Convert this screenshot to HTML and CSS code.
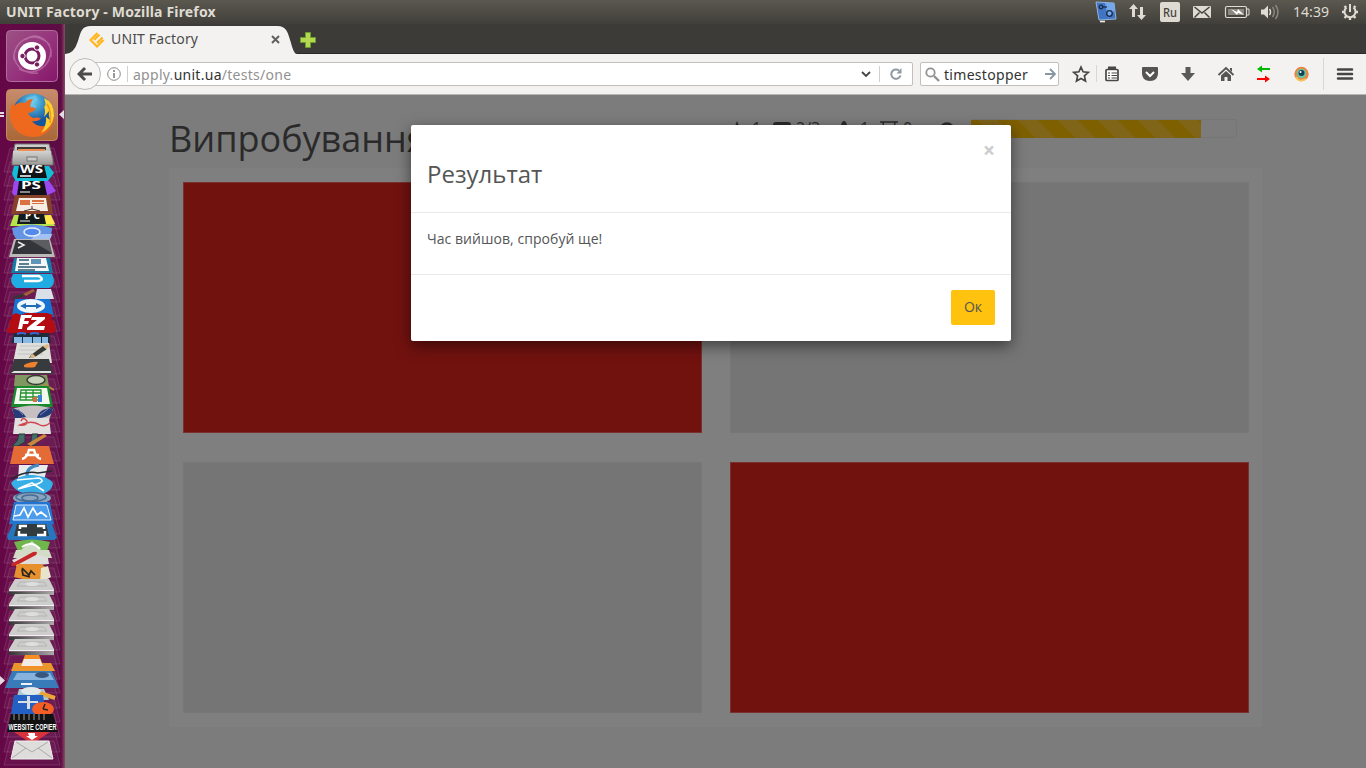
FILE: index.html
```html
<!DOCTYPE html>
<html lang="uk">
<head>
<meta charset="utf-8">
<title>UNIT Factory</title>
<link rel="stylesheet" href="styles.css">
</head>
<body>
<header class="menubar">
  <span class="window-title">UNIT Factory - Mozilla Firefox</span>
  <svg class="indicators" width="280" height="24" viewBox="1086 0 280 24">
    <path d="M1096 2l18 1 2 16-17 1z" fill="#3f75c4" stroke="#97b5da"/><path d="M1105 3h9l1 7-7 8z" fill="#73a8ed"/>
    <g fill="none" stroke="#1d2b42" stroke-width="1.3"><circle cx="1101" cy="7" r="1.800"/><circle cx="1109.500" cy="13.500" r="2.800"/><path d="M1103 7l4 0"/></g><path d="M1100 21.500h5" stroke="#eee" stroke-width="1.600"/>
    <g fill="#dfdbd2">
      <path d="M1133.500 4l4.500 5h-3v8h-3v-8h-3zM1141.500 20l-4.500-5h3v-8h3v8h3z"/>
      <rect x="1160" y="2" width="20" height="20" rx="2"/>
      <rect x="1193" y="6" width="18" height="12" rx="1"/>
      <path d="M1261 9.500h3l4-4v13l-4-4h-3z"/>
    </g>
    <path d="M1194.500 7l7.500 6 7.500-6M1194.500 17.500l5-5M1209.500 17.500l-5-5" fill="none" stroke="#45433e" stroke-width="1.500"/>
    <rect x="1225.500" y="6.500" width="21" height="11" rx="1.500" fill="none" stroke="#dfdbd2" stroke-width="1.200"/><path d="M1247 9h2v6h-2" fill="none" stroke="#dfdbd2"/><rect x="1228" y="9" width="16" height="6" fill="#8b8880"/><path d="M1231 9l6 3 1-3 6 6-6-2-1 2z" fill="#fff"/>
    <path d="M1269.500 9q2 3 0 6" fill="none" stroke="#dfdbd2" stroke-width="1.500"/><path d="M1272.500 7q3.500 5 0 10M1275.500 5q5 7 0 14" fill="none" stroke="#89867d" stroke-width="1.500"/>
    <text class="keyboard" x="1163" y="17" textLength="14" lengthAdjust="spacingAndGlyphs">Ru</text>
    <text class="clock" x="1293" y="17" textLength="36" lengthAdjust="spacingAndGlyphs">14:39</text>
    <g fill="none" stroke="#dfdbd2"><path d="M1346.500 7.500a5.500 5.500 0 1 0 7 0" stroke-width="2"/><path d="M1350 4v8" stroke-width="2"/><path d="M1344.500 6l1.600 1.600M1355.500 6l-1.600 1.600M1342 12h2.500M1355.500 12h2.500M1344.500 18l1.600-1.600M1355.500 18l-1.600-1.600M1350 17.500v2.500" stroke-width="2.400"/></g>
  </svg>
</header>
<div class="desktop">
  <nav class="launcher">
  <svg width="65" height="744" viewBox="0 24 65 744">
    <defs>
      <linearGradient id="dash" x1="0" y1="0" x2="1" y2="1"><stop offset="0" stop-color="#9b5282"/><stop offset=".5" stop-color="#97357e"/><stop offset="1" stop-color="#861668"/></linearGradient>
      <linearGradient id="fox" x1="0" y1="0" x2="0" y2="1"><stop offset="0" stop-color="#c78c6d"/><stop offset="1" stop-color="#a96738"/></linearGradient>
      <linearGradient id="metal" x1="0" y1="0" x2="0" y2="1"><stop offset="0" stop-color="#d2d2d0"/><stop offset="1" stop-color="#9d9d9b"/></linearGradient>
      <linearGradient id="rim" x1="0" y1="0" x2="1" y2="0"><stop offset="0" stop-color="#333"/><stop offset="1" stop-color="#aaa"/></linearGradient>
      <radialGradient id="globe" cx=".5" cy=".2"><stop offset="0" stop-color="#66d0ee"/><stop offset="1" stop-color="#14559d"/></radialGradient>
      <g id="glass"><path d="M10 0h44l6 24H4z" fill="#fff" fill-opacity=".04" stroke="#cf9fc0" stroke-opacity=".2"/></g>
      <g id="drive"><path d="M15 0h34l5 10v2H9v-2z" fill="#cdcdcb"/><path d="M9 11h45v1.500H9z" fill="#f1f1f1"/><path d="M9 12.500h45V16H9z" fill="url(#rim)"/><path d="M20 3h24l3 4H17z" fill="none" stroke="#b4b4b2"/><ellipse cx="32" cy="5" rx="7" ry="2" fill="#dededd"/></g>
    </defs>
    <g><use href="#glass" y="148"/><use href="#glass" y="162"/><use href="#glass" y="176"/><use href="#glass" y="191"/><use href="#glass" y="205"/><use href="#glass" y="220"/><use href="#glass" y="234"/><use href="#glass" y="249"/><use href="#glass" y="263"/><use href="#glass" y="278"/><use href="#glass" y="292"/><use href="#glass" y="307"/><use href="#glass" y="321"/><use href="#glass" y="336"/><use href="#glass" y="350"/><use href="#glass" y="365"/><use href="#glass" y="379"/><use href="#glass" y="394"/><use href="#glass" y="408"/><use href="#glass" y="423"/><use href="#glass" y="437"/><use href="#glass" y="452"/><use href="#glass" y="466"/><use href="#glass" y="481"/><use href="#glass" y="495"/><use href="#glass" y="510"/><use href="#glass" y="524"/><use href="#glass" y="539"/><use href="#glass" y="553"/><use href="#glass" y="568"/><use href="#glass" y="582"/><use href="#glass" y="597"/><use href="#glass" y="611"/><use href="#glass" y="626"/><use href="#glass" y="640"/><use href="#glass" y="655"/><use href="#glass" y="669"/><use href="#glass" y="684"/><use href="#glass" y="698"/><use href="#glass" y="713"/><use href="#glass" y="728"/><use href="#glass" y="741"/></g>

    <rect x="6.500" y="30.500" width="51" height="51" rx="4" fill="url(#dash)" stroke="#b06b9f"/>
    <path d="M14 60C12 43 32 27 50 45M51 49c0 18-16 28-32 20M25 40c13-10 28 2 26 17M38 73c-13 2-23-7-24-17" fill="none" stroke="#dfadd0" stroke-opacity=".4" stroke-width="1.500"/>
    <circle cx="32" cy="56" r="14" fill="#fff"/><circle cx="32" cy="56" r="7" fill="none" stroke="#791c60" stroke-width="3"/><g fill="#791c60" stroke="#fff"><circle cx="22.500" cy="56" r="2.700"/><circle cx="37" cy="47.500" r="2.700"/><circle cx="37" cy="64.500" r="2.700"/></g>

    <rect x="6.500" y="89.500" width="51" height="51" rx="4" fill="url(#fox)" stroke="#c08b67"/>
    <circle cx="33" cy="114" r="20.500" fill="url(#globe)"/><path d="M26 98l10-3 2 5-5 3 4 4-7 2z" fill="#75caec" opacity=".6"/>
    <path d="M13 102q-4 8-3 15 2 13 13 18 13 5 23-2 8-7 8-17-3 8-10 10-8 1-12-5 6 1 9-3-4-1-8 0-4-2-5-5 4 0 8-4-2-2-6-2 0-4 3-8-5 0-8 4-6-2-11 3z" fill="#ee681d"/><path d="M44 98q10 4 10 18-2 12-13 17 6-8 5-16l4 3q-2-5-1-9l-5 6q2-7 0-10 3-1 0-9z" fill="#ffd02e"/><path d="M47 104q5 8 3 19" fill="none" stroke="#f39a1c" stroke-width="1.500"/>
    <path d="M0 112h4v2H0zM0 115h4v2H0zM64 110l-5 4.500 5 4.500zM0 676l5 4.500-5 4.500z" fill="#e4dce2"/>

    <path d="M15 144h34l4 15v6H12v-6z" fill="url(#metal)" stroke="#707070"/><path d="M17 147h29v3H17z" fill="#3e3935"/><path d="M18 149h27v2H18z" fill="#ee8e55"/><path d="M13 151h38v13H13z" fill="url(#metal)"/><rect x="27" y="157" width="10" height="4" fill="#c9c9c7" stroke="#777"/>
    <path d="M14 166h35l5 7-7 9H16l-4-8z" fill="#13bed7"/><path d="M19 165h25l3 13H17z" fill="#101318"/><text class="tile-code" x="20" y="173" textLength="23" lengthAdjust="spacingAndGlyphs">WS</text><path d="M20 176h11" stroke="#fff" stroke-width="1.500"/>
    <path d="M14 181h35l7 10-8 4 0 4H17l-5-6z" fill="#9c48f0"/><path d="M19 181h25l3 14H17z" fill="#101018"/><text class="tile-code" x="21" y="189" textLength="20" lengthAdjust="spacingAndGlyphs">PS</text><path d="M20 192h10" stroke="#fff"/>
    <path d="M14 215h36l5 11H10z" fill="#b4e34a"/><path d="M43 216l8-1 4 9H41z" fill="#ffe84c"/><path d="M19 214h25l2 10H17z" fill="#121b1a"/><text class="tile-code" x="25" y="219" textLength="15">PC</text><path d="M20 221h10" stroke="#eee"/>
    <path d="M15 195h35l3 19H11z" fill="#874329"/><path d="M19 198h27l2 13H16z" fill="#f6ede5"/><path d="M20 200h10v5H20zm12 0h12v2H32zm0 3h12v1H32z" fill="#db7042"/><path d="M32 206v3l-8 2m8-2 8 2" fill="none" stroke="#49302b"/>
    <path d="M12 228q20-7 40 0 0 13-13 17H24q-11-5-12-17z" fill="#6495e4"/><path d="M24 245l13-11h15q-1 9-15 11z" fill="#9fc1f4"/><ellipse cx="32" cy="232" rx="8" ry="4" fill="#548aed" stroke="#ebf1fc" stroke-width="1.500"/>
    <path d="M14 239h36l5 18H9z" fill="#bbbab8"/><path d="M16 240h32l4 14H12z" fill="#33353a"/><path d="M30 240h19l3 13z" fill="#5c5d60"/><path d="M18 242l6 3-6 3" fill="none" stroke="#eee" stroke-width="1.500"/>
    <path d="M14 258h36l3 15H11z" fill="#157ca7"/><path d="M17 258h29l3 13H15z" fill="#f4f6f8"/><path d="M19 260h10M19 264h10M18 267h28M18 270h17" stroke="#2a5971" stroke-width="1.300"/><path d="M31 259h10v5H31z" fill="#5f95b7"/>
    <path d="M13 274h39q5 11-3 14H16q-8-6-3-14z" fill="#20abe2"/><path d="M22 276h17q6 4-1 5H24" fill="none" stroke="#fff" stroke-width="2.500"/>
    <path d="M37 289h14l3 10H35z" fill="#d9e0e8"/><path d="M33 289l2 3-16 6-8 1q4-4 12-5z" fill="#343638"/><path d="M23 294l10-5 2 2-9 5z" fill="#a65f39"/>
    <path d="M15 299h35l4 18H12z" fill="#1674d2"/><ellipse cx="31" cy="306" rx="14" ry="7" fill="#eff7ff"/><path d="M20 306l6-3v2h10v-2l6 3-6 3v-2H26v2z" fill="#236cb5"/>
    <path d="M12 315l4-2 5 2 5-2h21l6 2-2 4 3 3 2 8-3 3H9l-3-3 4-4-1-4 3-4z" fill="#b40c13"/><path d="M21 315h11l-1 3h-6l-1 3h5l-1 3h-5l-1 5h-4zM32 317h13v2l-9 7h9l-1 4H27v-2l10-8h-6z" fill="#fff"/>
    <path d="M14 333h35l2 10H11z" fill="#202b3a"/><path d="M14 337h8v6h-8zm9 0h9v6h-9zm10 0h8v6h-8zm9 0h6v6h-6z" fill="#87b9e4"/><path d="M17 334q5-2 9 0m4 0q5-2 9 0" fill="none" stroke="#3668d1" stroke-width="2"/>
    <path d="M17 343h32l3 20H13z" fill="#dededb"/><path d="M20 346h25M19 350h27M18 354h25" stroke="#c3c3c1"/><path d="M31 355l12-9 4 3-12 8-6 1z" fill="#373732"/><path d="M31 355l2-1 3 3-6 1zM43 346l4-2 3 2-4 3z" fill="#ddba83"/>
    <path d="M14 359h35l4 15H10z" fill="#383b3e"/><path d="M14 371h37v2H11z" fill="#e1e1df"/><path d="M24 365q8-4 14-3l-3 5q-5 1-11 0z" fill="#ed812e"/>
    <path d="M15 375h32l2 11H14z" fill="#809762"/><ellipse cx="36" cy="380" rx="9" ry="4.500" fill="#c8d1bc" stroke="#343c30" stroke-width="1.500"/><path d="M44 384l10 6" stroke="#b48a39" stroke-width="2"/>
    <path d="M15 386h34l4 21H11z" fill="#178a2e"/><path d="M17 388h30l3 16H14z" fill="#f4f9ef"/><path d="M21 390h20v10H20zM21 393h20M20 397h22M26 390v10M33 390v10" fill="none" stroke="#249130" stroke-width="1.300"/><path d="M33 397h4v5h-4z" fill="#db6e40"/><path d="M38 395h4v7h-4z" fill="#3584d8"/>
    <path d="M12 409q22-7 41 0l-4 11H16z" fill="#c7c0c3"/><path d="M12 408q11 3 14 9l-11 2zM53 408q-14 0-16 10 10 0 15-5z" fill="#263b77"/><path d="M18 409l5 6M48 409l-8 6" stroke="#788bbb"/>
    <path d="M15 418h34l2 16H13z" fill="#e1e0df"/><path d="M21 421q2-5 6 0 0 5-7 4 11-5 18-1 6 4 12-1" fill="none" stroke="#d04751" stroke-width="1.500"/>
    <path d="M19 434l6 0 0 8-7 4h-6l5-5zM32 434h6l-2 11h-9l4-4z" fill="#476b68" stroke="#203a35"/><path d="M27 444l17-10 3 2-16 10z" fill="#cb873e"/>
    <path d="M14 446h35l5 18H10z" fill="#e46b35"/><path d="M22 459q5-1 7-9h5q2 8 7 9M25 455h14" fill="none" stroke="#fff" stroke-width="2.500"/>
    <path d="M19 465h29l-4 15H18z" fill="#e8ecef"/><path d="M39 465q-13 2-12 11l15 4" fill="none" stroke="#4088be" stroke-width="3"/><path d="M11 479q15-9 27-6l14-2" fill="none" stroke="#252a2e" stroke-width="1.500"/>
    <path d="M11 483q7-8 22-8 15 1 20 8-1 10-16 12-21 0-26-12z" fill="#38aee7"/><path d="M17 480l22-2q7 3-2 6l-19 5q8-4 14-6l12 8" fill="none" stroke="#fff" stroke-width="1.700"/>
    <ellipse cx="32" cy="498" rx="19" ry="6" fill="#89a4bd"/><g fill="none" stroke="#466d97" stroke-width="1.500"><ellipse cx="31" cy="497" rx="15" ry="4.500"/><ellipse cx="30" cy="498" rx="8" ry="3"/></g>
    <path d="M14 502h36l4 22H9z" fill="#2374ce"/><path d="M16 505h31l4 15H13z" fill="#4c9cec" stroke="#e0effe"/><path d="M14 516l6-1 4-7 4 9 5-9 4 7 4-3 6 5" fill="none" stroke="#fff" stroke-width="1.700"/>
    <path d="M13 524h39l5 14-3 2H8l-1-4z" fill="#2676bd"/><path d="M17 524h29l3 12H14z" fill="#323b40"/><path d="M27 526h-7v3m-1 2v4h8m10-9h7v3m1 2v4h-8" fill="none" stroke="#fff" stroke-width="2.500"/>
    <path d="M14 542q18-5 36 0l-3 9H18z" fill="#70b64d"/><path d="M21 550l11-9 9 9h8l3 8H13l3-8z" fill="#d3dcc6"/><path d="M22 547q10-7 18 2" fill="none" stroke="#fff" stroke-width="2"/>
    <path d="M12 560q22-10 36-2l1 6-32 3z" fill="#dedfdb"/><path d="M11 564l22-12q6-1 3 3l-19 10q-6 3-6-1z" fill="#c62829"/>
    <path d="M17 564h24l6 4-7 15-26-6z" fill="#e7912e"/><path d="M41 568l7-2 3 11-11 6z" fill="#e9e5cc"/><path d="M22 568l7 7 2-4 4 4M22 569l1 6 7 2" fill="none" stroke="#292420" stroke-width="1.700"/>
    <use href="#drive" y="579"/><use href="#drive" y="594"/><use href="#drive" y="609"/><use href="#drive" y="624"/><use href="#drive" y="639"/>
    <path d="M14 663h37l4 8H11z" fill="#e9962c"/><path d="M25 655h14l5 13H20z" fill="#f78e23"/><path d="M24 659h16l3 7H21z" fill="#f1ece6"/>
    <path d="M12 671h40l7 17H5z" fill="#397bb9"/><path d="M17 673h33l4 7H13z" fill="#86b2dd"/><ellipse cx="42" cy="675" rx="7" ry="3" fill="#38587f"/><path d="M21 684h11" stroke="#f0f3f7" stroke-width="2"/>
    <path d="M19 689h25l5 11H16z" fill="#abc8d2"/><path d="M40 693l15 5" stroke="#eca637" stroke-width="4"/><ellipse cx="31" cy="691" rx="10" ry="4" fill="#e2e8e9"/>
    <path d="M14 695h29l3 19H11z" fill="#245fc4"/><path d="M27 696h3v5h8v2h-8v6h-3v-6h-9v-2h9z" fill="#d9dee3"/><ellipse cx="43" cy="709" rx="11" ry="7" fill="#f45e25"/><path d="M43 709l2-5M43 709l5 1" stroke="#272422" stroke-width="1.500"/>
    <path d="M14 732h36l-18 12z" fill="#d8333d"/><path d="M28 733h7v3h3l-6 4-6-4h3z" fill="#fff"/>
    <path d="M15 741h34l4 18H11z" fill="#dedddb" stroke="#efefed"/><path d="M16 742l16 10 16-10M12 758l14-10M52 758l-14-10" fill="none" stroke="#aaa"/>
    <path d="M11 714h42l5 18H7z" fill="#111"/><path d="M14 714v6m5-6v6m5-6v6m5-6v6m5-6v6m5-6v6m5-6v6" stroke="#555" stroke-width="2"/><text class="copier" x="8.500" y="730" textLength="48" lengthAdjust="spacingAndGlyphs">WEBSITE COPIER</text>
  </svg>
  </nav>
  <main class="browser">
    <div class="tabstrip">
      <div class="tab">
        <svg class="tab-shape" width="232" height="30" viewBox="65 24 232 30"><path d="M65 54q9 0 13-13c3-10 4-15 13-15h186c10 0 11 7 14 17 2 8 4 11 6 11z" fill="#f3f2f1"/></svg>
        <svg class="favicon" width="16" height="16" viewBox="0 0 16 16"><g fill="none" stroke="#ffb51b" stroke-width="2.200"><path d="M8.500 1L1.500 8l6.500 6.500 6.500-6.500M5 8l5.500-5.500M8 11l5.500-5.500"/></g></svg>
        <span class="tab-name">UNIT Factory</span>
        <svg class="tab-close" width="9" height="9" viewBox="0 0 9 9"><path d="M1 1l7 7M8 1L1 8" stroke="#60605d" stroke-width="2"/></svg>
      </div>
      <svg class="newtab" width="18" height="18" viewBox="0 0 18 18"><path d="M6.500 1.500h5v5h5v5h-5v5h-5v-5h-5v-5h5z" fill="#b4d84f" stroke="#6b9d2c"/></svg>
    </div>
    <div class="toolbar">
      <div class="back"><svg width="16" height="16" viewBox="0 0 16 16"><path d="M8 2L2 8l6 6M3 8h12" fill="none" stroke="#4b4b49" stroke-width="3"/></svg></div>
      <div class="urlbar">
        <svg class="info" width="14" height="14" viewBox="0 0 14 14"><circle cx="7" cy="7" r="6.300" fill="none" stroke="#898987"/><path d="M7 3v2M7 6v5" stroke="#777" stroke-width="1.500"/></svg>
        <span class="divider"></span><span class="url">apply.<b>unit.ua</b>/tests/one</span>
        <svg class="chev" width="10" height="7" viewBox="0 0 10 7"><path d="M1 1l4 4 4-4" fill="none" stroke="#444" stroke-width="1.800"/></svg>
        <span class="divider"></span>
        <svg class="reload" width="12" height="12" viewBox="0 0 12 12"><path d="M9 2.500a4.700 4.700 0 1 0 1.500 5" fill="none" stroke="#9099a4" stroke-width="2"/><path d="M6.500 5.500h5V0z" fill="#9099a4"/></svg>
      </div>
      <div class="search">
        <svg width="15" height="15" viewBox="0 0 15 15"><circle cx="5.500" cy="5.500" r="4.200" fill="none" stroke="#929291" stroke-width="1.800"/><path d="M9 9l5 5" stroke="#929291" stroke-width="2.400"/></svg>
        <span class="query">timestopper</span>
        <svg class="go" width="12" height="12" viewBox="0 0 12 12"><path d="M1 6h9M6 1l5 5-5 5" fill="none" stroke="#8996a4" stroke-width="1.800"/></svg>
      </div>
      <svg class="tools" width="300" height="40" viewBox="1066 54 300 40">
        <path d="M1081 67l2.100 4.800 5.200.6-3.900 3.500 1.100 5.100-4.500-2.600-4.500 2.600 1.100-5.100-3.900-3.500 5.200-.6z" fill="none" stroke="#474745" stroke-width="1.700"/>
        <path d="M1096.500 65v17M1323.500 58v32" stroke="#d8d7d5"/>
        <rect x="1106" y="69.500" width="12" height="11" rx="1" fill="#fff" stroke="#474745" stroke-width="1.700"/><path d="M1108 68h8" stroke="#474745" stroke-width="3"/><path d="M1108 73h2m1.500 0h5.500M1108 75.500h2m1.500 0h5.500M1108 78h2m1.500 0h5.500" fill="none" stroke="#474745" stroke-width="1.200"/>
        <path d="M1143 67h14a1 1 0 0 1 1 1v5c0 5-3 8-8 8s-8-3-8-8v-5a1 1 0 0 1 1-1z" fill="#545452"/><path d="M1146 72l4 4 4-4" fill="none" stroke="#fff" stroke-width="2"/>
        <path d="M1185.500 67h5v6h4.500l-7 8-7-8h4.500z" fill="#5a5a58"/>
        <path d="M1218.500 75l7.500-7 7.500 7" fill="none" stroke="#555553" stroke-width="1.800"/><path d="M1221 75.500l5-4.500 5 4.500V81h-3.500v-4h-3v4h-3.500z" fill="#555553"/><path d="M1230 68h2v4l-2-2z" fill="#555553"/>
        <path d="M1257 69l5-3.500V68h8v2h-8v2.500z" fill="#00b900"/><path d="M1270 79l-5-3.500V78h-8v2h8v2.500z" fill="#f00"/>
        <circle cx="1301.500" cy="74" r="7.200" fill="#ef833e"/><path d="M1296 77q3 6 10 2" fill="none" stroke="#f5c45d" stroke-width="2"/><circle cx="1301.500" cy="73.500" r="4.800" fill="#68c79e"/><circle cx="1301.500" cy="73" r="3" fill="#173f59"/><circle cx="1300.500" cy="72" r="1" fill="#fff"/>
        <path d="M1338 69.500h14M1338 74h14M1338 78.500h14" stroke="#454543" stroke-width="2.500" stroke-linecap="round"/>
      </svg>
    </div>
    <section class="page">
      <div class="page-head">
        <h1>Випробування</h1>
        <div class="stats">
          <svg width="16" height="16" viewBox="0 0 16 16"><path d="M8 0l2 5 6 1-5 4 2 6-5-3-5 3 2-6-5-4 6-1z" fill="#2a2a2a"/></svg><span class="n1">1</span>
          <svg width="18" height="16" viewBox="0 0 18 16"><rect y="1" width="18" height="15" rx="3" fill="#2a2a2a"/></svg><span class="n2">2/3</span>
          <svg width="16" height="16" viewBox="0 0 16 16"><path d="M8 0q2 0 3 4l3 9H2l3-9q1-4 3-4z" fill="#2a2a2a"/></svg><span class="n3">1</span>
          <svg width="18" height="16" viewBox="0 0 18 16"><path d="M0 1h18M3 1l1 9 5 3 5-3 1-9" fill="none" stroke="#2a2a2a" stroke-width="1.500"/></svg><span class="n4">0</span>
          <svg width="16" height="16" viewBox="0 0 16 16"><circle cx="8" cy="9" r="6.500" fill="none" stroke="#2a2a2a" stroke-width="2.500"/></svg>
        </div>
        <div class="progress"><div class="progress-fill"></div></div>
      </div>
      <div class="board"><div class="cell red"></div><div class="cell"></div><div class="cell"></div><div class="cell red"></div></div>
      <div class="modal" role="dialog">
        <div class="modal-head"><span class="close">×</span><h2>Результат</h2></div>
        <div class="modal-body">Час вийшов, спробуй ще!</div>
        <div class="modal-foot"><button class="ok">Ок</button></div>
      </div>
    </section>
  </main>
</div>
</body>
</html>
```

FILE: styles.css
```css
* { box-sizing: border-box; }
body { margin: 0; width: 1366px; height: 768px; overflow: hidden; display: flex; flex-direction: column; font-family: "Open Sans", "Noto Sans", sans-serif; }
svg { display: block; flex: none; }
.menubar { height: 24px; flex: none; display: flex; align-items: center; justify-content: space-between; padding-left: 6px; background: linear-gradient(#5b584f, #403f3a); }
.window-title { color: #dfdbd2; font: bold 14px/22px "Noto Sans", sans-serif; letter-spacing: .17px; white-space: nowrap; }
.keyboard { font: 500 13px "Noto Sans", sans-serif; fill: #45433e; }
.clock { font: 15px "Noto Sans", sans-serif; fill: #dfdbd2; }
.desktop { flex: 1; display: flex; min-height: 0; }
.launcher { width: 65px; flex: none; background: linear-gradient(90deg, #650746, #5d0c44 94%, #7b3459 98%, #7b5268); }
.tile-code { font: bold 10px "Noto Sans", sans-serif; fill: #fff; }
.copier { font: bold 9.5px "Liberation Sans", sans-serif; fill: #fff; }
.browser { flex: 1; display: flex; flex-direction: column; min-width: 0; }
.tabstrip { height: 30px; flex: none; display: flex; align-items: center; background: #3c3b37; border-bottom: 1px solid #2b2a27; }
.tab { position: relative; width: 232px; height: 30px; display: flex; align-items: center; padding: 2px 17px 0 24px; }
.tab-shape { position: absolute; left: 0; top: 0; }
.favicon, .tab-name, .tab-close { position: relative; }
.tab-name { margin-left: 6px; flex: 1; font: 14px/18px "Noto Sans", sans-serif; letter-spacing: .15px; color: #4c4c4c; padding-bottom: 1px; }
.newtab { margin: 3px 0 0 2px; }
.toolbar { height: 41px; flex: none; display: flex; align-items: center; background: #f3f2f1; border-bottom: 1px solid #b6b5b3; }
.back { position: relative; z-index: 1; width: 32px; height: 32px; margin-left: 4px; flex: none; border: 1px solid #bcbbb9; border-radius: 50%; background: #f6f5f4; display: flex; align-items: center; justify-content: center; }
.urlbar { width: 821px; height: 24px; margin-left: -9px; flex: none; display: flex; align-items: center; padding: 0 10px 0 14px; background: #fff; border: 1px solid #c1c0be; border-radius: 2px; }
.divider { width: 1px; height: 16px; background: #d0d0ce; margin-left: 6px; }
.url { flex: 1; margin-left: 5px; font: 14px "Noto Sans", sans-serif; letter-spacing: .27px; color: #929292; }
.url b { font-weight: 400; color: #333; }
.chev { margin-right: 2px; }
.reload { margin-left: 10px; }
.search { width: 139px; height: 24px; margin-left: 7px; flex: none; display: flex; align-items: center; padding: 0 2px 0 4px; background: #fff; border: 1px solid #c1c0be; border-radius: 2px; }
.query { flex: 1; margin-left: 4px; font: 14px "Noto Sans", sans-serif; letter-spacing: .3px; color: #333; }
.tools { margin-left: 7px; }
.page { position: relative; flex: 1; min-height: 0; padding: 0 104px; background: #7c7c7c; }
.page-head { height: 73px; display: flex; align-items: flex-start; }
h1 { width: 550px; margin: 19px 0 0; font-size: 36px; line-height: 50px; font-weight: 400; color: #2a2a2a; }
.stats { display: flex; align-items: center; width: 252px; margin: 25px 0 0; padding-left: 10px; font-size: 16px; line-height: 17px; color: #2a2a2a; }
.stats span { flex: none; margin-left: 5px; }
.n1 { width: 23px; padding-left: 2px; }
.n2 { width: 40px; }
.n3 { width: 23px; padding-left: 3px; }
.n4 { width: 36px; }
.progress { width: 266px; height: 19px; margin-top: 24px; border: 1px solid #767676; border-left: 0; border-radius: 2px; }
.progress-fill { width: 230px; height: 18px; background: linear-gradient(45deg, #806418 25%, #7f6000 25%, #7f6000 50%, #806418 50%, #806418 75%, #7f6000 75%) 7px 0 / 40px 40px; }
.board { width: 1093px; height: 559px; padding: 14px; display: grid; grid-template: repeat(2, 251px) / repeat(2, 518.5px); gap: 29px 28.5px; background: #7f7f7f; }
.cell { background: #757575; border: 1px solid #777; }
.cell.red { background: #72120f; border-color: #7b302e; }
.modal { position: absolute; left: 346px; top: 30px; width: 600px; height: 216px; display: flex; flex-direction: column; background: #fff; border-radius: 2px; box-shadow: 0 5px 15px rgba(0,0,0,.5); color: #555; }
.modal-head { height: 88px; padding: 15px 16px; border-bottom: 1px solid #e9e9e9; }
.close { float: right; font: bold 21px/21px "Open Sans", sans-serif; color: #ccc; }
.modal h2 { margin: 18px 0 0; font-size: 24px; line-height: 32px; font-weight: 400; }
.modal-body { height: 62px; padding: 16px; font-size: 14px; letter-spacing: .05px; line-height: 20px; border-bottom: 1px solid #e9e9e9; }
.modal-foot { flex: 1; padding: 15px 16px; display: flex; justify-content: flex-end; }
.ok { width: 44px; height: 35px; padding: 0 0 2px; border: 0; border-radius: 2px; background: #ffc20e; color: #555; font: 14px "Open Sans", sans-serif; }
```
